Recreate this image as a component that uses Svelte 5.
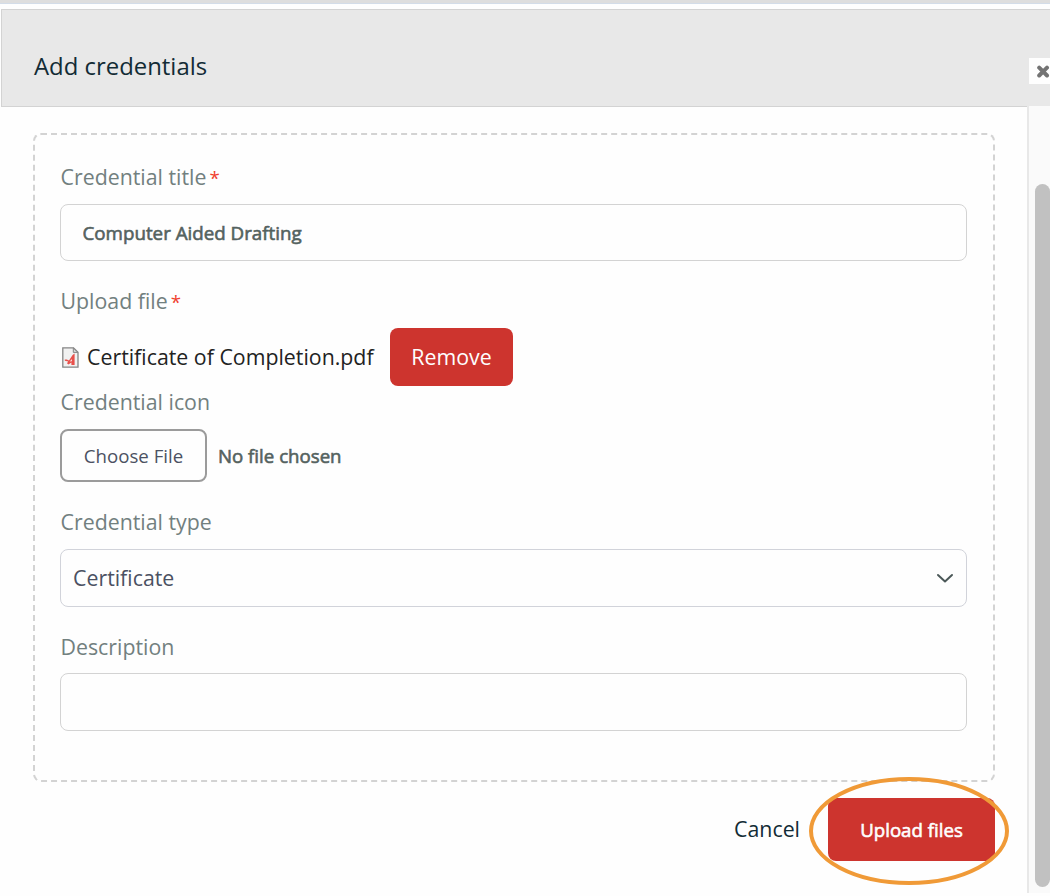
<script lang="ts">
    let title = $state('Computer Aided Drafting');
    let fileName = $state('Certificate of Completion.pdf');
    let credentialType = $state('Certificate');
    let description = $state('');
</script>

<div class="modal">
    <div class="top-strip"></div>
    <header class="modal-header">
        <h2>Add credentials</h2>
        <button type="button" class="close-btn" aria-label="Close">
            <svg width="14" height="14" viewBox="0 0 14 14">
                <path d="M3.2 3.7L11 11.5M11 3.7L3.2 11.5" stroke="#737373" stroke-width="4" stroke-linecap="round" />
            </svg>
        </button>
    </header>

    <div class="modal-body">
        <form class="content" onsubmit={(e) => e.preventDefault()}>
            <div class="upload-box">
                <div class="field">
                    <label for="title">Credential title<span class="required">*</span></label>
                    <input id="title" class="text-input" type="text" bind:value={title} />
                </div>

                <div class="field file-field">
                    <span class="label">Upload file<span class="required">*</span></span>
                    <div class="file-row">
                        <svg class="pdf-icon" width="17" height="21" viewBox="0 0 17 21">
                            <path d="M.8.8H11.5L16 5.2V20.2H.8Z" fill="#f1f1f1" stroke="#858585" stroke-width="1.3" />
                            <path d="M11.3 1V5.4H15.8Z" fill="#d9d9d9" stroke="#858585" />
                            <path d="M12.6 6.4V18H9.4V15.6L6.4 17.4L5 16.2L6.2 14.6L2.8 13.8V12.6L4.8 12.4L7 13.6L10.6 8Z" fill="#e8504b" />
                            <path d="M7.6 14.6L10 12V14.2Z" fill="#f8dedc" />
                        </svg>
                        <span class="file-name">{fileName}</span>
                        <button type="button" class="btn remove-btn">Remove</button>
                    </div>
                </div>

                <div class="field">
                    <span class="label">Credential icon</span>
                    <div class="chooser">
                        <button type="button" class="choose-btn">Choose File</button>
                        <span class="no-file">No file chosen</span>
                    </div>
                </div>

                <div class="field">
                    <label for="type">Credential type</label>
                    <div class="select-wrap">
                        <select id="type" bind:value={credentialType}>
                            <option>Certificate</option>
                        </select>
                        <svg class="chevron" width="18" height="11" viewBox="0 0 18 11">
                            <path d="M2 2L9 8.4L16 2" fill="none" stroke="#4b5858" stroke-width="2" stroke-linecap="round" stroke-linejoin="round" />
                        </svg>
                    </div>
                </div>

                <div class="field last">
                    <label for="description">Description</label>
                    <input id="description" class="text-input" type="text" bind:value={description} />
                </div>
            </div>

            <div class="actions">
                <button type="button" class="cancel-btn">Cancel</button>
                <div class="highlighted">
                    <button type="submit" class="btn upload-btn">Upload files</button>
                    <svg class="ring" width="200" height="108" viewBox="0 0 200 108">
                        <ellipse cx="100" cy="54" rx="98" ry="52" fill="none" stroke="#f09a37" stroke-width="4" />
                    </svg>
                </div>
            </div>
        </form>

        <div class="scrollbar">
            <div class="thumb"></div>
        </div>
    </div>
</div>

<style>
    :global(body) {
        background: #fefefe;
        overflow: hidden;
    }

    .modal {
        width: 1050px;
        height: 893px;
        display: flex;
        flex-direction: column;
        font-family: 'Open Sans', 'Noto Sans', sans-serif;
        overflow: hidden;
    }

    .modal *,
    .modal {
        box-sizing: border-box;
    }

    button,
    input,
    select {
        font-family: inherit;
        margin: 0;
    }

    .top-strip {
        flex: none;
        height: 9px;
        background: linear-gradient(#dedede 3px, #cbd5e2 3px, #dbe4ef 4px, #fefefe 4px);
    }

    .modal-header {
        flex: none;
        display: flex;
        justify-content: space-between;
        height: 98px;
        margin-left: 1px;
        padding-left: 32px;
        background: #e8e8e8;
        border: 1px solid #d3d3d3;
        border-right: 0;
    }

    h2 {
        margin: 38px 0 0;
        font-size: 23.9px;
        line-height: 36px;
        font-weight: 400;
        color: #122b35;
    }

    .close-btn {
        display: flex;
        align-items: center;
        width: 21px;
        height: 26px;
        margin-top: 48px;
        padding: 0 0 0 7px;
        border: 0;
        background: #fefefe;
    }

    .close-btn svg {
        flex: none;
    }

    .modal-body {
        flex: 1;
        display: flex;
        min-height: 0;
        margin-top: -1px;
    }

    .content {
        width: 1027px;
        padding: 27px 32px 0 33px;
        background: linear-gradient(#d3d3d3, #d3d3d3) 1px 0 / 100% 1px no-repeat;
    }

    .upload-box {
        height: 649px;
        padding: 27px 26px 0 25px;
        border: 2px dashed #d3d3d3;
        border-radius: 8px;
    }

    .field {
        display: flex;
        flex-direction: column;
        gap: 12px;
        margin-bottom: 25px;
    }

    .file-field {
        margin-bottom: 1px;
    }

    .last {
        gap: 11px;
    }

    label,
    .label {
        height: 30px;
        padding-left: 0.5px;
        font-size: 21.33px;
        line-height: 30px;
        color: #72807f;
    }

    .required {
        margin-left: 3px;
        font-size: 18.67px;
        line-height: 1;
        color: #f0402f;
    }

    .text-input {
        width: 100%;
        height: 57px;
        padding: 0 21.5px;
        border: 1px solid #d3d3d3;
        border-radius: 8px;
        background: #fefefe;
        color: #54625f;
        font-size: 18.75px;
        -webkit-text-stroke: 0.6px currentColor;
        outline: none;
    }

    .last .text-input {
        height: 58px;
    }

    .file-row {
        display: flex;
        align-items: center;
        height: 58px;
        padding-left: 2px;
    }

    .file-name {
        width: 287px;
        margin: 0 16px 0 8px;
        padding-bottom: 2px;
        font-size: 21.33px;
        color: #222;
        white-space: nowrap;
    }

    .btn {
        border: 0;
        border-radius: 8px;
        background: #cd342e;
        color: #fefefe;
    }

    .remove-btn {
        width: 123px;
        height: 58px;
        padding: 0 0 2px;
        font-size: 21.33px;
    }

    .chooser {
        display: flex;
        align-items: center;
        gap: 11px;
    }

    .choose-btn {
        width: 147px;
        height: 53px;
        padding: 0;
        border: 2px solid #9b9b9b;
        border-radius: 8px;
        background: #fefefe;
        color: #4b5162;
        font-size: 18.67px;
    }

    .no-file {
        color: #54625f;
        font-size: 18.67px;
        -webkit-text-stroke: 0.6px currentColor;
    }

    .select-wrap {
        position: relative;
    }

    select {
        display: block;
        appearance: none;
        width: 100%;
        height: 58px;
        padding: 0 12px 2px;
        border: 1px solid #d1d3da;
        border-radius: 8px;
        background: #fefefe;
        color: #4b5162;
        font-size: 21.33px;
    }

    .chevron {
        position: absolute;
        right: 13px;
        top: 23.5px;
        pointer-events: none;
    }

    .actions {
        display: flex;
        justify-content: flex-end;
        align-items: center;
        gap: 28px;
        height: 63px;
        margin-top: 16px;
    }

    .cancel-btn {
        padding: 0 0 2px;
        border: 0;
        background: none;
        color: #122b35;
        font-size: 21.33px;
    }

    .highlighted {
        position: relative;
    }

    .upload-btn {
        display: block;
        width: 167px;
        height: 63px;
        padding: 0;
        font-size: 18.67px;
        -webkit-text-stroke: 0.6px currentColor;
    }

    .ring {
        position: absolute;
        left: -19px;
        top: -21px;
        pointer-events: none;
    }

    .scrollbar {
        width: 23px;
        padding: 78px 0 0 6px;
        border-left: 2px solid #e8e8e8;
        background: #fafafa;
    }

    .thumb {
        width: 15px;
        height: 703px;
        border-radius: 8px;
        background: #c1c1c1;
    }
</style>
